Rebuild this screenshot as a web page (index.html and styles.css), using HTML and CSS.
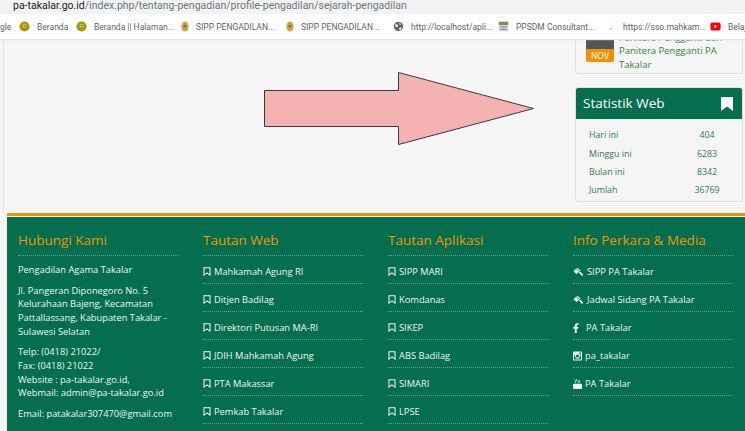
FILE: index.html
```html
<!DOCTYPE html>
<html lang="id">
<head>
<meta charset="utf-8">
<title>Sejarah Pengadilan</title>
<link rel="stylesheet" href="styles.css">
</head>
<body>
<svg class="defs" width="0" height="0" aria-hidden="true">
  <symbol id="bm" viewBox="0 0 10 11"><path d="M1.2 .8H8.8V10L5 7.2 1.2 10Z" fill="none" stroke="currentColor" stroke-width="1.3"/></symbol>
  <symbol id="gavel" viewBox="0 0 14 12"><path d="M5.6 .5 9.6 4.2 8.4 5.4 4.4 1.7ZM.6 5 3.8 2 7.6 5.6 4.4 8.6ZM7.4 6.6 8.8 5.4 13.2 9.4 11.4 11.2Z" fill="currentColor"/></symbol>
  <symbol id="coin" viewBox="0 0 14 14"><circle cx="7" cy="7" r="6.5" fill="#a8980f"/><circle cx="7" cy="6" r="2.4" fill="#d9cc55"/><circle cx="7" cy="6" r="1" fill="#6d5f0a"/></symbol>
  <symbol id="shield" viewBox="0 0 10 14"><path d="M5 .5C8 .5 9.500 3 9.500 7S8 13.500 5 13.500.5 11 .5 7 2 .5 5 .5Z" fill="#cda64a"/><circle cx="5" cy="6.500" r="2" fill="#8f7420"/></symbol>
</svg>

<header class="url-bar">
  <span class="url"><span class="host">pa-takalar.go.id</span>/index.php/tentang-pengadian/profile-pengadilan/sejarah-pengadilan</span>
</header>

<nav class="bookmarks">
  <span class="bm bm-cut">gle</span>
  <span class="bm bm-a"><svg class="fav"><use href="#coin"/></svg>Beranda</span>
  <span class="bm bm-b"><svg class="fav"><use href="#coin"/></svg>Beranda || Halaman...</span>
  <span class="bm bm-c"><svg class="fav fav-s"><use href="#shield"/></svg>SIPP PENGADILAN...</span>
  <span class="bm bm-d"><svg class="fav fav-s"><use href="#shield"/></svg>SIPP PENGADILAN...</span>
  <span class="bm bm-e">
    <svg class="fav" viewBox="0 0 14 14"><circle cx="7" cy="7" r="6" fill="#5f6368"/><path d="M3 3.500 6.500 5 5.500 8 3 7.500ZM8 1.500 10.500 4 8.500 5.500ZM8 8.500 11.500 8 9.500 12 8 11Z" fill="#e8eaed"/></svg>http://localhost/apli...</span>
  <span class="bm bm-f">
    <svg class="fav fav-w" viewBox="0 0 14 14"><rect x="1" y="1" width="12" height="12" fill="#cfd3df"/><rect x="1" y="1" width="12" height="4" fill="#8a8f3c"/><rect x="3" y="7" width="8" height="1" fill="#6b7390"/><rect x="3" y="10" width="8" height="1" fill="#6b7390"/></svg>PPSDM Consultant...</span>
  <span class="bm bm-g">
    <svg class="fav fav-t" viewBox="0 0 14 14"><path d="M6 9.500 7.500 11 9 8.500" fill="none" stroke="#79b57c" stroke-width="1"/></svg>https://sso.mahkam...</span>
  <span class="bm bm-h">
    <svg class="fav" viewBox="0 0 14 14"><rect x=".5" y="2" width="13" height="10" rx="2.500" fill="#f00"/><path d="M5.600 4.800 9.200 7 5.600 9.200Z" fill="#fff"/></svg>Belaja</span>
</nav>

<main class="page">
  <div class="content">
    <svg class="arrow" width="272" height="76" viewBox="0 0 272 76"><path d="M.5 18.500H134.500V.5L269.500 36.500 134.500 72.500V54.500H.5Z" fill="#f4b2b2" stroke="#3b3b3b" stroke-width="1"/></svg>
  </div>
  <aside class="sidebar">
    <section class="card agenda">
      <div class="cal"><span class="cal-top"></span><span class="cal-month">NOV</span></div>
      <p class="agenda-text">Panitera Pengganti dan Panitera Pengganti PA Takalar</p>
    </section>
    <section class="card stats">
      <h2 class="stats-head">Statistik Web
        <svg class="stats-icon" width="12" height="14" viewBox="0 0 12 14"><path d="M0 0H12V14L6 9.500 0 14Z" fill="#fff"/></svg>
      </h2>
      <dl class="stats-list">
        <div class="stat"><dt>Hari ini</dt><dd>404</dd></div>
        <div class="stat"><dt>Minggu ini</dt><dd>6283</dd></div>
        <div class="stat"><dt>Bulan ini</dt><dd>8342</dd></div>
        <div class="stat"><dt>Jumlah</dt><dd>36769</dd></div>
      </dl>
    </section>
  </aside>
</main>

<footer class="footer">
  <div class="foot-col">
    <h3 class="foot-head">Hubungi Kami</h3>
    <div class="contact">
      <p>Pengadilan Agama Takalar</p>
      <p>Jl. Pangeran Diponegoro No. 5<br>Kelurahaan Bajeng, Kecamatan Pattallassang, Kabupaten Takalar - Sulawesi Selatan</p>
      <p>Telp: (0418) 21022/<br>Fax: (0418) 21022<br>Website : pa-takalar.go.id,<br>Webmail: admin@pa-takalar.go.id</p>
      <p>Email: patakalar307470@gmail.com</p>
    </div>
  </div>
  <div class="foot-col">
    <h3 class="foot-head">Tautan Web</h3>
    <ul class="links">
      <li><svg class="ic"><use href="#bm"/></svg>Mahkamah Agung RI</li>
      <li><svg class="ic"><use href="#bm"/></svg>Ditjen Badilag</li>
      <li><svg class="ic"><use href="#bm"/></svg>Direktori Putusan MA-RI</li>
      <li><svg class="ic"><use href="#bm"/></svg>JDIH Mahkamah Agung</li>
      <li><svg class="ic"><use href="#bm"/></svg>PTA Makassar</li>
      <li><svg class="ic"><use href="#bm"/></svg>Pemkab Takalar</li>
    </ul>
  </div>
  <div class="foot-col">
    <h3 class="foot-head">Tautan Aplikasi</h3>
    <ul class="links">
      <li><svg class="ic"><use href="#bm"/></svg>SIPP MARI</li>
      <li><svg class="ic"><use href="#bm"/></svg>Komdanas</li>
      <li><svg class="ic"><use href="#bm"/></svg>SIKEP</li>
      <li><svg class="ic"><use href="#bm"/></svg>ABS Badilag</li>
      <li><svg class="ic"><use href="#bm"/></svg>SIMARI</li>
      <li><svg class="ic"><use href="#bm"/></svg>LPSE</li>
    </ul>
  </div>
  <div class="foot-col">
    <h3 class="foot-head">Info Perkara &amp; Media</h3>
    <ul class="links">
      <li><svg class="ic ic-g"><use href="#gavel"/></svg>SIPP PA Takalar</li>
      <li><svg class="ic ic-g"><use href="#gavel"/></svg>Jadwal Sidang PA Takalar</li>
      <li><svg class="ic ic-f" viewBox="0 0 6 11"><path d="M1.700 11V6.200H0V4.200H1.700V2.700C1.700 1 2.700 .2 4.100 .2H5.700V2.200H4.700C4 2.200 3.800 2.500 3.800 3.100V4.200H5.600L5.300 6.200H3.800V11Z" fill="currentColor"/></svg>PA Takalar</li>
      <li><svg class="ic ic-i" viewBox="0 0 10 10"><path fill-rule="evenodd" d="M1 0H9A1 1 0 0 1 10 1V9A1 1 0 0 1 9 10H1A1 1 0 0 1 0 9V1A1 1 0 0 1 1 0ZM7 1.200V3H8.800V1.200ZM1.200 4.300V8.800H8.800V4.300H7.500A2.700 2.700 0 1 1 2.500 4.300ZM5 3.300A1.700 1.700 0 1 0 5 6.700 1.700 1.700 0 0 0 5 3.300Z" fill="currentColor"/></svg>pa_takalar</li>
      <li><svg class="ic ic-i" viewBox="0 0 10 11"><path d="M2 0 3 2.500 4 0H4.700L3.400 3V4.500H2.700V3L1.400 0ZM5.300 1H6V3.300H6.700V1H7.400V4H5.300ZM1 5.200H9A1 1 0 0 1 10 6.200V10A1 1 0 0 1 9 11H1A1 1 0 0 1 0 10V6.200A1 1 0 0 1 1 5.200Z" fill="currentColor"/></svg>PA Takalar</li>
    </ul>
  </div>
</footer>
</body>
</html>
```

FILE: styles.css
```css
* { box-sizing: border-box; }
html, body { margin: 0; padding: 0; }
body {
  width: 745px;
  height: 431px;
  overflow: hidden;
  background: #f6f6f6;
  font-family: "Open Sans", "Liberation Sans", sans-serif;
  color: #fff;
  position: relative;
}
.defs { position: absolute; }

.url-bar {
  height: 14px;
  background: #f1f3f4;
  padding-left: 13px;
  font-family: Roboto, "Liberation Sans", sans-serif;
  font-size: 10.500px;
  line-height: 11px;
  color: #70757a;
  white-space: nowrap;
  overflow: hidden;
}
.host { color: #202124; }

.bookmarks {
  height: 25px;
  background: #fff;
  display: flex;
  align-items: center;
  font-family: Roboto, "Liberation Sans", sans-serif;
  font-size: 8.500px;
  color: #5f6368;
  white-space: nowrap;
  overflow: hidden;
  padding-bottom: 0;
  box-shadow: 0 1px 1px #e6e6e6;
  position: relative;
}
.bm { display: flex; align-items: center; gap: 7px; flex: none; }
.fav { width: 11px; height: 11px; flex: none; }
.fav-s { width: 8px; height: 11px; }
.fav-w { width: 11px; height: 11px; }
.fav-t { width: 11px; height: 11px; }
.bm-cut { width: 19px; }
.bm-a { width: 57px; }
.bm-b { width: 105px; }
.bm-c { width: 105px; }
.bm-d { width: 107px; }
.bm-e { width: 105px; }
.bm-f { width: 107px; }
.bm-g { width: 105px; }
.bm-h { width: 40px; }

.page {
  height: 174px;
  display: flex;
  justify-content: space-between;
  overflow: hidden;
  padding-left: 3px;
}
.content {
  flex: 1;
  border-left: 1px solid #e4e4e4;
  position: relative;
}
.arrow { position: absolute; left: 260px; top: 33px; }

.sidebar {
  width: 168px;
  margin-right: 2px;
  display: flex;
  flex-direction: column;
  justify-content: flex-end;
  gap: 13px;
  padding-bottom: 11px;
  flex: none;
}
.card {
  background: #f5f5f5;
  border: 1px solid #e2e2e2;
  border-radius: 3px;
  flex: none;
}
.agenda {
  display: flex;
  gap: 5px;
  padding: 0 10px 2px;
  height: 60px;
  align-items: flex-end;
}
.cal { width: 28px; flex: none; align-self: flex-end; margin-bottom: 9px; border-radius: 0 0 2px 2px; overflow: hidden; }
.cal-top { display: block; height: 16px; background: #555; }
.cal-month {
  display: block;
  height: 13px;
  background: #f39200;
  color: #fff;
  font-size: 8.500px;
  line-height: 13px;
  text-align: center;
}
.agenda-text {
  margin: 0;
  font-size: 9.500px;
  line-height: 13.500px;
  color: #2e8540;
}

.stats { height: 115px; overflow: hidden; }
.stats-head {
  margin: 0;
  height: 31px;
  background: #046e4f;
  color: #fff;
  font-size: 13.500px;
  font-weight: 400;
  line-height: 31px;
  padding: 0 9px 0 7px;
  display: flex;
  align-items: center;
  justify-content: space-between;
}
.stats-icon { flex: none; }
.stats-list { margin: 7px 0 0; padding: 0 13px; }
.stat {
  height: 18.400px;
  display: flex;
  align-items: center;
  font-size: 8.800px;
  color: #2e7d4f;
}
.stat dt { flex: 1; }
.stat dd { margin: 0; width: 40px; text-align: center; margin-right: 2px; }

.footer {
  margin-left: 7px;
  height: 218px;
  background: #046e4f;
  border-top: 3px solid #f39200;
  box-shadow: inset 0 1px 0 #f5f5f5;
  padding: 14px 0 0 11px;
  display: grid;
  grid-template-columns: repeat(4, 160px);
  column-gap: 25px;
  align-items: start;
  overflow: hidden;
}
.foot-head {
  margin: 0;
  height: 26px;
  font-size: 13.500px;
  font-weight: 400;
  line-height: 20px;
  color: #f39200;
  border-bottom: 1px dotted #5fa58f;
  white-space: nowrap;
}
.contact { font-size: 9.300px; line-height: 13.670px; color: #eef6f3; padding-top: 7px; }
.contact p { margin: 0 0 7px; }
.links { list-style: none; margin: 0; padding: 0; }
.links li {
  height: 28px;
  padding-top: 4px;
  border-bottom: 1px dotted #5fa58f;
  display: flex;
  align-items: center;
  gap: 3px;
  font-size: 9.300px;
  color: #eef6f3;
  white-space: nowrap;
}
.ic { width: 8px; height: 9px; flex: none; color: #eef6f3; }
.ic-g { width: 11px; height: 10px; }
.ic-f { width: 6px; height: 10px; margin-right: 4px; }
.ic-i { width: 9px; height: 10px; }
```
